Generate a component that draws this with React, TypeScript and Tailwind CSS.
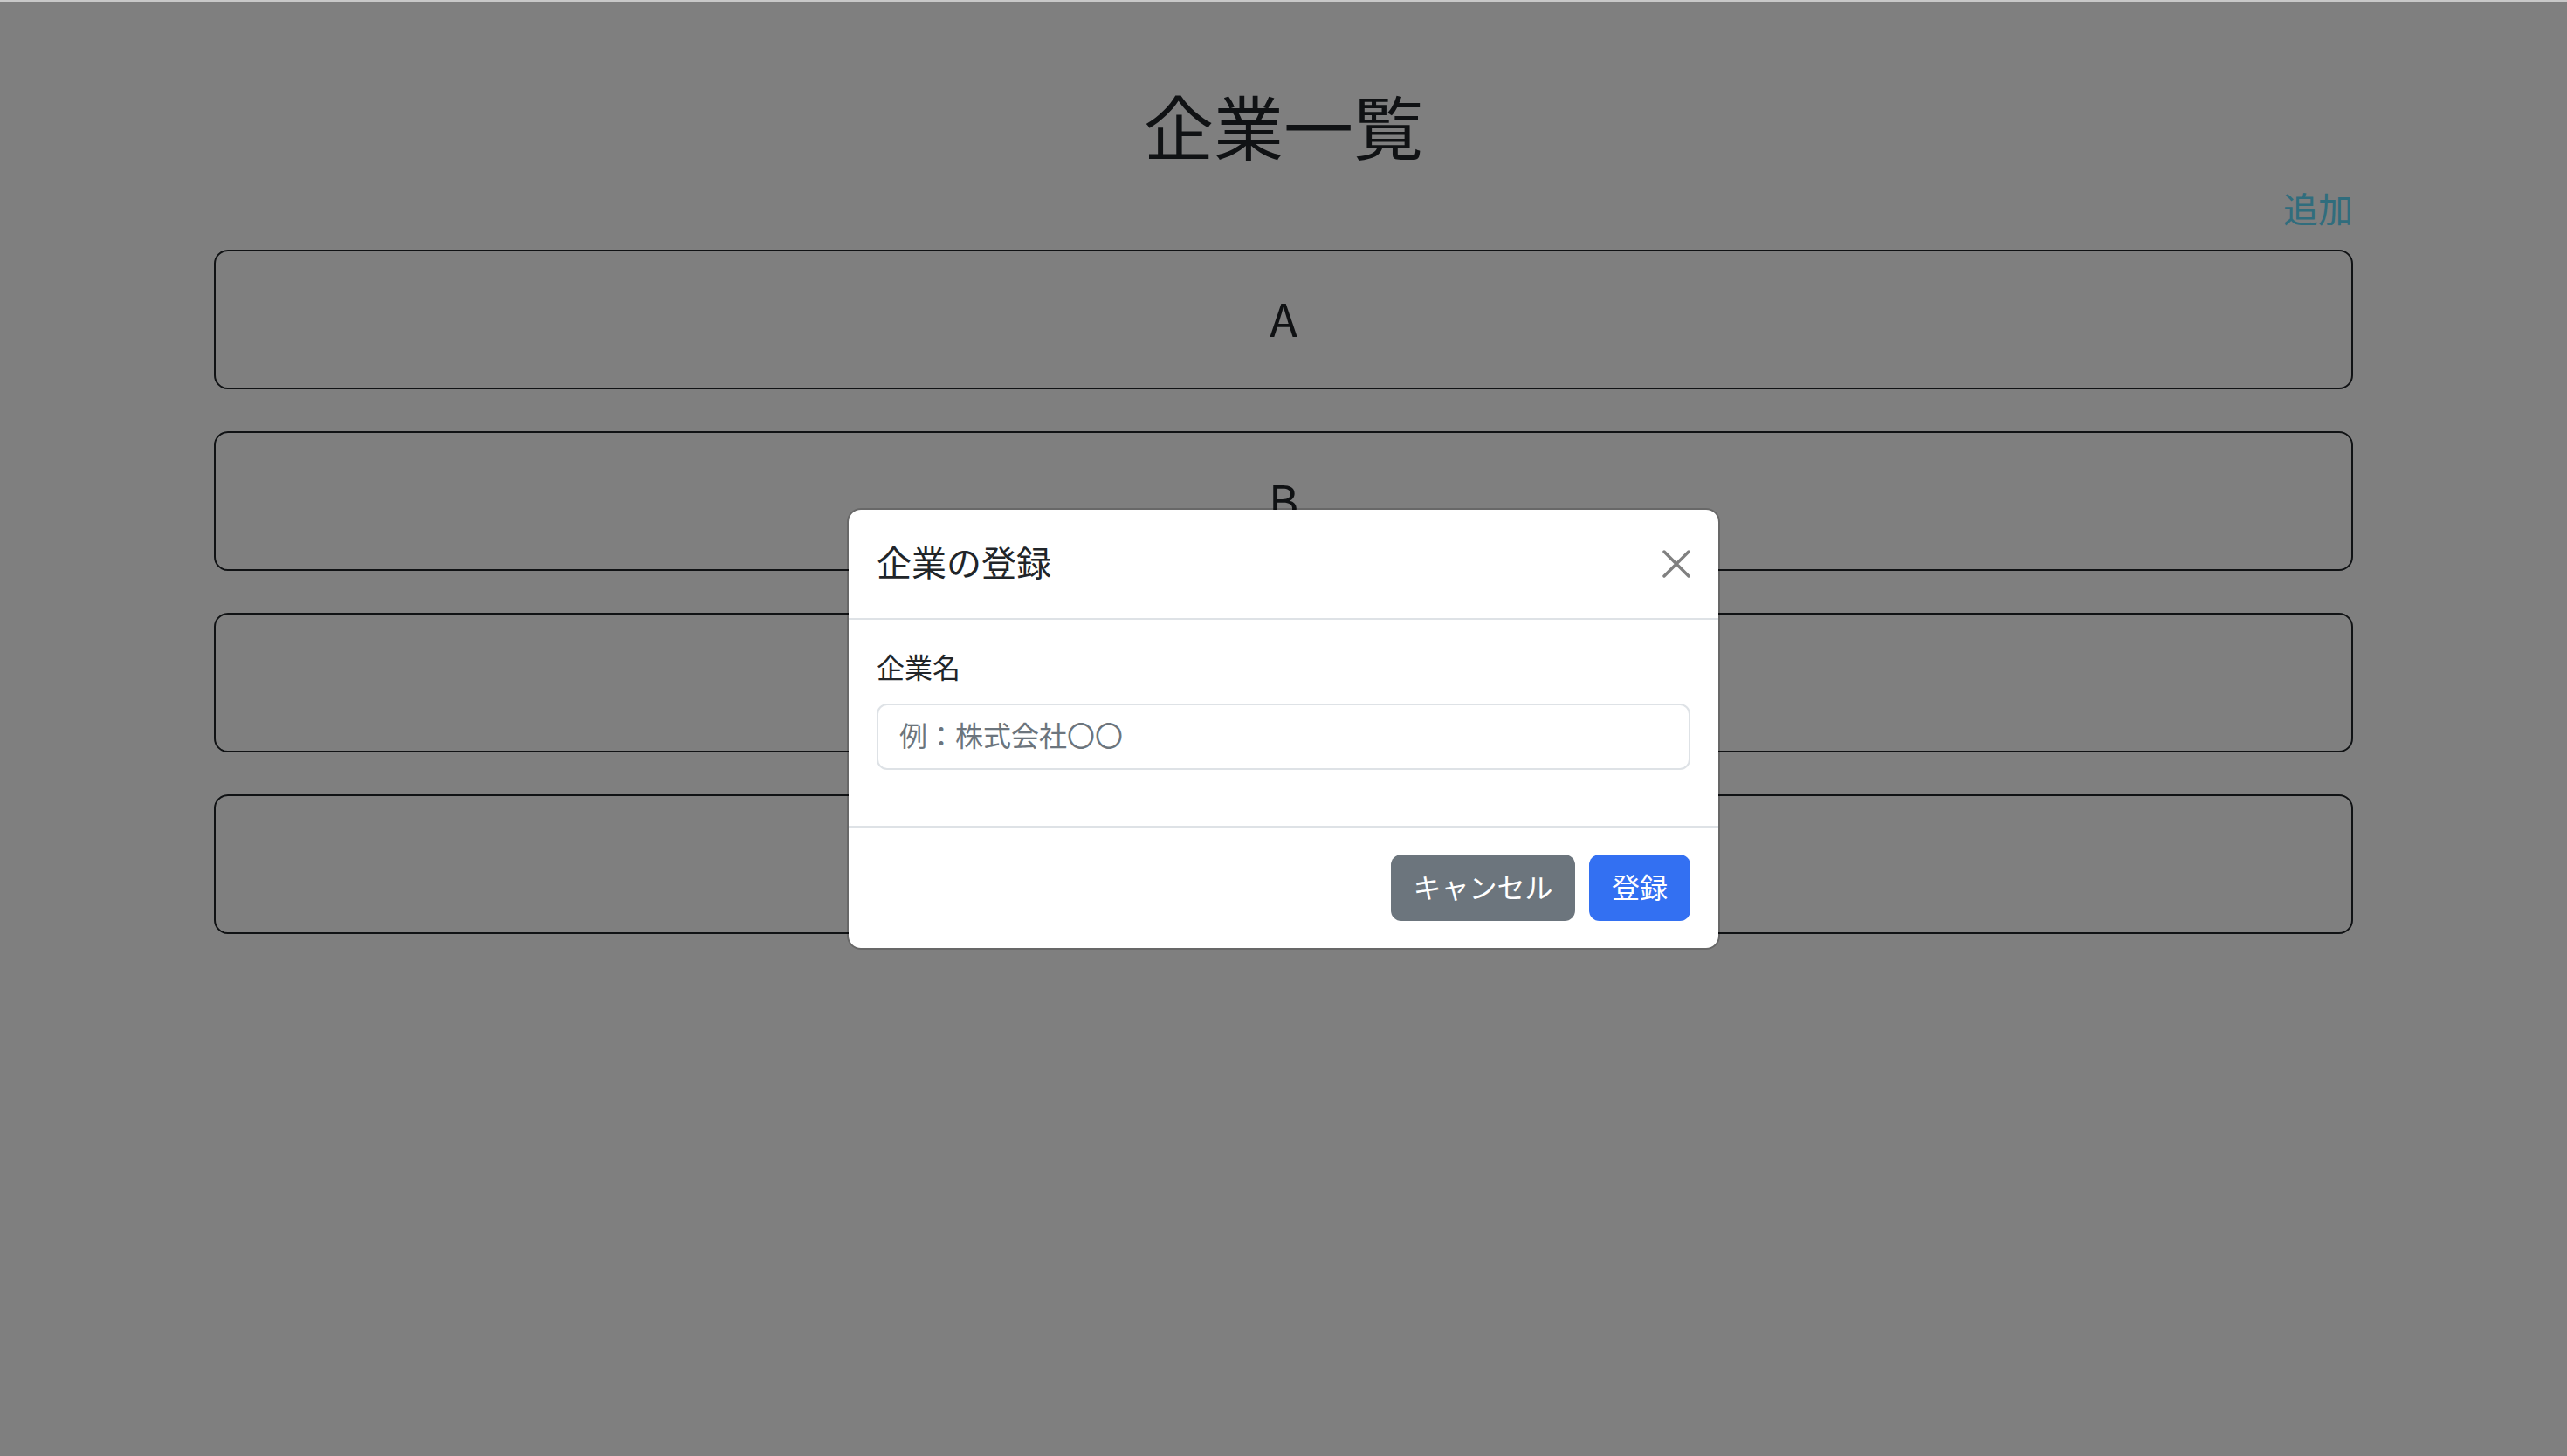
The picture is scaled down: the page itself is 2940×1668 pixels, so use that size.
import React from "react";

const companies = ["A", "B", "C", "D"];

export default function App() {
  return (
    <div
      className="relative min-h-screen w-full bg-white border-t-2 border-[#c8c8c8] text-[#212529]"
      style={{ fontFamily: '"Noto Sans CJK JP", "Noto Sans", sans-serif' }}
    >
      {/* Page */}
      <div className="mx-auto w-[2450px] pt-[92px]">
        <h1 className="text-center text-[80px] leading-[96px] font-normal">企業一覧</h1>
        <div className="mt-[18px] flex justify-end">
          <a className="text-[40px] leading-[60px] text-[#61dafb] cursor-pointer">追加</a>
        </div>
        <div className="mt-[18px] flex flex-col gap-[48px]">
          {companies.map((c) => (
            <div
              key={c}
              className="flex h-[160px] items-center justify-center rounded-[16px] border-2 border-[#212529] pb-[4px] text-[52px]"
            >
              {c}
            </div>
          ))}
        </div>
      </div>

      {/* Overlay + Modal */}
      <div className="absolute inset-0 flex items-center justify-center bg-black/50">
        <div className="w-[1000px] rounded-[16px] border-2 border-black/[0.175] bg-white bg-clip-padding">
          <div className="flex items-center justify-between border-b-2 border-[#dee2e6] p-[32px]">
            <h5 className="pb-[6px] text-[40px] leading-[54px] font-normal text-[#212529]">企業の登録</h5>
            <button className="flex h-[32px] w-[32px] items-center justify-center" aria-label="close">
              <svg width="32" height="32" viewBox="0 0 32 32">
                <path d="M2 2 L30 30 M30 2 L2 30" stroke="#808080" strokeWidth="3.5" strokeLinecap="round" />
              </svg>
            </button>
          </div>
          <div className="p-[32px]">
            <div className="mb-[32px]">
              <label className="mb-[22px] block text-[32px] leading-[42px] text-[#212529]">企業名</label>
              <input
                className="block h-[76px] w-full rounded-[12px] border-2 border-[#dee2e6] px-[24px] pt-0 pb-[6px] text-[32px] text-[#212529] outline-none placeholder:text-[#6c757d]"
                placeholder="例：株式会社〇〇"
              />
            </div>
          </div>
          <div className="flex justify-end gap-[16px] border-t-2 border-[#dee2e6] px-[32px] py-[31px]">
            <button className="h-[76px] w-[211px] rounded-[12px] bg-[#6c757d] pb-[4px] text-[32px] text-white">
              キャンセル
            </button>
            <button className="h-[76px] w-[116px] rounded-[12px] bg-[#3370f2] pb-[4px] text-[32px] text-white">
              登録
            </button>
          </div>
        </div>
      </div>
    </div>
  );
}
